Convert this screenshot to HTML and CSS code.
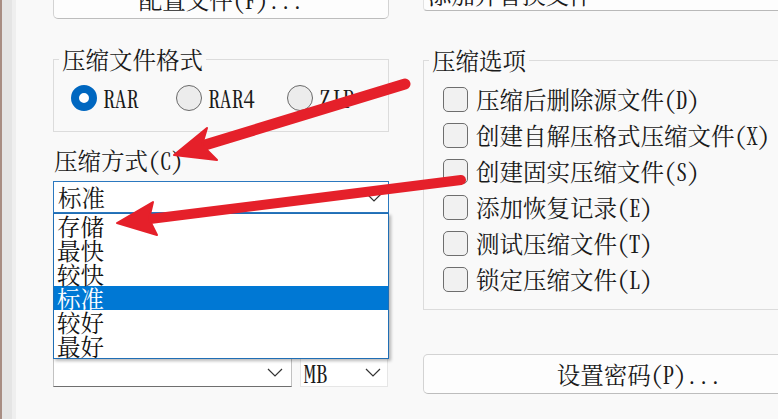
FILE: index.html
```html
<!DOCTYPE html>
<html lang="zh-CN">
<head>
<meta charset="utf-8">
<title>压缩选项</title>
<link rel="stylesheet" href="styles.css">
</head>
<body>
<div class="screen">
  <div class="edge"></div>
  <div class="main">
    <div class="col left">
      <div class="btn top-btn">配置文件(F)...</div>

      <div class="group fmt">
        <div class="gtitle">压缩文件格式</div>
        <div class="radios">
          <div class="opt"><span class="radio on"></span><span>RAR</span></div>
          <div class="opt"><span class="radio"></span><span>RAR4</span></div>
          <div class="opt"><span class="radio"></span><span>ZIP</span></div>
        </div>
      </div>

      <div class="label">压缩方式(C)</div>
      <div class="combo-wrap">
        <div class="combo active">
          <span>标准</span>
          <svg class="chev" width="16" height="9" viewBox="0 0 16 9"><path d="M1 1 L8 8 L15 1" fill="none" stroke="#333" stroke-width="1.2"/></svg>
        </div>
        <ul class="list">
          <li>存储</li>
          <li>最快</li>
          <li>较快</li>
          <li class="sel">标准</li>
          <li>较好</li>
          <li>最好</li>
        </ul>
      </div>

      <div class="dict-row">
        <div class="combo dict">
          <span></span>
          <svg class="chev" width="16" height="9" viewBox="0 0 16 9"><path d="M1 1 L8 8 L15 1" fill="none" stroke="#333" stroke-width="1.2"/></svg>
        </div>
        <div class="combo unit">
          <span>MB</span>
          <svg class="chev" width="16" height="9" viewBox="0 0 16 9"><path d="M1 1 L8 8 L15 1" fill="none" stroke="#333" stroke-width="1.2"/></svg>
        </div>
      </div>
    </div>

    <div class="col right">
      <div class="field top-field">添加并替换文件</div>

      <div class="group opts">
        <div class="gtitle">压缩选项</div>
        <div class="checks">
          <div class="chk"><span class="box"></span><span>压缩后删除源文件(D)</span></div>
          <div class="chk"><span class="box"></span><span>创建自解压格式压缩文件(X)</span></div>
          <div class="chk"><span class="box"></span><span>创建固实压缩文件(S)</span></div>
          <div class="chk"><span class="box"></span><span>添加恢复记录(E)</span></div>
          <div class="chk"><span class="box"></span><span>测试压缩文件(T)</span></div>
          <div class="chk"><span class="box"></span><span>锁定压缩文件(L)</span></div>
        </div>
      </div>

      <div class="btn pwd">设置密码(P)...</div>
    </div>
  </div>

  <svg class="arrows" width="778" height="419" viewBox="0 0 778 419">
    <g fill="#e5202a" stroke="#e5202a" stroke-linecap="round" stroke-linejoin="round">
      <line x1="405" y1="84" x2="205" y2="145" stroke-width="11"/>
      <polygon points="174,155 207,128 202,145 217,160" stroke-width="2"/>
      <line x1="461" y1="180" x2="150" y2="219" stroke-width="10"/>
      <polygon points="117,223 153,202 149,219 157,235" stroke-width="2"/>
    </g>
  </svg>
</div>
</body>
</html>
```
FILE: styles.css
```css
* { box-sizing: border-box; }

html, body {
  margin: 0;
  padding: 0;
  background: #f9f9f9;
}

body {
  font-family: "Noto Serif CJK SC", "Noto Sans CJK SC", "Liberation Serif", serif;
  font-size: 23.5px;
  font-feature-settings: "hwid" 1;
  color: #1a1a1a;
  overflow: hidden;
}

.screen {
  position: relative;
  width: 778px;
  height: 419px;
  overflow: hidden;
  display: flex;
}

.edge {
  flex: 0 0 16px;
  border-left: 2px solid #a88d83;
  background: linear-gradient(to right, #e5e5e5 0, #e5e5e5 10px, #efefef 10px, #efefef 14px);
}

.main {
  flex: 1;
  display: flex;
  gap: 34px;
  padding-left: 37px;
  min-width: 0;
}

.col { display: flex; flex-direction: column; }
.left { flex: 0 0 336px; }
.right { flex: 0 0 440px; }

/* buttons */
.btn {
  background: #fdfdfd;
  border: 1px solid #d3d3d3;
  border-bottom-color: #bdbdbd;
  border-radius: 5px;
  display: flex;
  align-items: center;
  justify-content: center;
  line-height: 26px;
}

.top-btn {
  height: 40px;
  margin-top: -21px;
}

.pwd {
  height: 40px;
  width: 432px;
  margin-top: 44px;
}

.field {
  height: 33px;
  margin-top: -22px;
  background: #fdfdfd;
  border: 1px solid #e2e2e2;
  border-bottom-color: #b9b9b9;
  border-radius: 4px 0 0 4px;
  padding-left: 4px;
  line-height: 30px;
}

/* group boxes */
.group {
  border: 1px solid #dcdcdc;
}

.gtitle {
  margin: -13px 0 0 5px;
  padding: 0 3px;
  width: fit-content;
  background: #f9f9f9;
  line-height: 24px;
  height: 24px;
}

.fmt {
  margin-top: 40px;
  padding-bottom: 20px;
}

.radios {
  margin-top: 14px;
  padding-left: 17px;
  display: grid;
  grid-template-columns: 105px 111px auto;
  height: 26px;
}

.opt {
  display: flex;
  align-items: center;
  gap: 6px;
  line-height: 26px;
}

.radio {
  width: 26px;
  height: 26px;
  border-radius: 50%;
  border: 1.5px solid #6a6a6a;
  background: #ececec;
  flex: 0 0 26px;
}

.radio.on {
  border: 8px solid #0067c0;
  background: #ffffff;
}

.label {
  margin-top: 15px;
  line-height: 26px;
  height: 26px;
  padding-left: 1px;
}

/* combo boxes */
.combo-wrap {
  position: relative;
  margin-top: 8px;
}

.combo {
  height: 32px;
  background: #ffffff;
  border: 1px solid #c9c9c9;
  border-bottom-color: #7a7a7a;
  display: flex;
  align-items: center;
  justify-content: space-between;
  padding: 0 6px 0 4px;
  line-height: 28px;
}

.combo.active {
  border: 1px solid #2b78bf;
}

.chev { flex: 0 0 16px; }

.list {
  position: absolute;
  left: 0;
  top: 32px;
  width: 336px;
  margin: 0;
  padding: 0;
  list-style: none;
  background: #ffffff;
  border: 1px solid #1f6eb5;
  box-shadow: 2px 2px 3px rgba(0, 0, 0, 0.28);
  z-index: 2;
}

.list li {
  height: 24px;
  line-height: 24px;
  padding-left: 3px;
  color: #111;
}

.list li.sel {
  background: #0078d4;
  color: #ffffff;
}

.dict-row {
  margin-top: 145px;
  display: flex;
  gap: 8px;
}

.dict-row .combo {
  height: 29px;
}

.dict {
  flex: 0 0 239px;
  border-color: #c2c2c2;
  border-bottom-color: #6f6f6f;
  padding-right: 8px;
}

.unit {
  flex: 0 0 88px;
  border-color: #e6e6e6;
  padding-right: 6px;
  padding-left: 3px;
}

/* check boxes */
.opts {
  margin-top: 49px;
  padding-bottom: 12px;
}

.checks {
  margin-top: 9px;
  padding-left: 19px;
  display: flex;
  flex-direction: column;
}

.chk {
  height: 36px;
  display: flex;
  align-items: center;
  gap: 8px;
  white-space: nowrap;
}

.box {
  flex: 0 0 25px;
  width: 25px;
  height: 25px;
  border: 1px solid #6e6e6e;
  border-radius: 5px;
  background: #f1f1f1;
}

.arrows {
  position: absolute;
  left: 0;
  top: 0;
  pointer-events: none;
  z-index: 5;
}
```
